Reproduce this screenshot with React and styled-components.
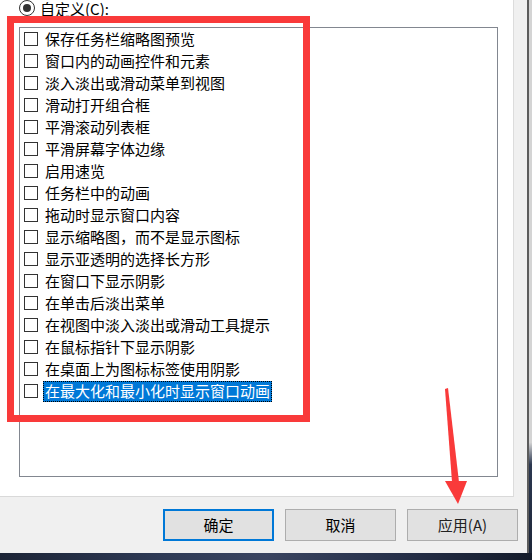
import styled, { createGlobalStyle } from "styled-components";

const Global = createGlobalStyle`
  html, body { margin: 0; padding: 0; background: #ffffff; }
  body { width: 532px; height: 560px; overflow: hidden; }
`;

const items = [
  "保存任务栏缩略图预览",
  "窗口内的动画控件和元素",
  "淡入淡出或滑动菜单到视图",
  "滑动打开组合框",
  "平滑滚动列表框",
  "平滑屏幕字体边缘",
  "启用速览",
  "任务栏中的动画",
  "拖动时显示窗口内容",
  "显示缩略图，而不是显示图标",
  "显示亚透明的选择长方形",
  "在窗口下显示阴影",
  "在单击后淡出菜单",
  "在视图中淡入淡出或滑动工具提示",
  "在鼠标指针下显示阴影",
  "在桌面上为图标标签使用阴影",
  "在最大化和最小化时显示窗口动画",
];

const Page = styled.div`
  position: relative;
  width: 532px;
  height: 560px;
  display: flex;
  flex-direction: column;
  font-family: "Noto Sans CJK SC", "Microsoft YaHei", sans-serif;
  font-size: 15px;
  color: #000;
`;

const Top = styled.div`
  display: flex;
  height: 553px;
`;

const Dialog = styled.div`
  width: 527px;
  display: flex;
  flex-direction: column;
  background: #f0f0f0;
`;

const Edge = styled.div`
  flex: 1;
  border-left: 2px solid #5c5c5c;
  background: linear-gradient(#d4d4d4 0%, #d4d4d4 80%, #2c3850 84%, #1d2638 100%);
`;

const Panel = styled.div`
  width: 514px;
  height: 497px;
  background: #fff;
  border-right: 1px solid #dcdcdc;
  border-bottom: 1px solid #d9d9d9;
  box-sizing: border-box;
  padding-left: 19px;
  display: flex;
  flex-direction: column;
`;

const RadioRow = styled.div`
  display: flex;
  align-items: center;
  gap: 5px;
  height: 16px;
  line-height: 17px;
`;

const Radio = styled.span`
  width: 16px;
  height: 16px;
  box-sizing: border-box;
  border: 1px solid #333;
  border-radius: 50%;
  display: flex;
  align-items: center;
  justify-content: center;
  &::after {
    content: "";
    width: 8px;
    height: 8px;
    border-radius: 50%;
    background: #333;
  }
`;

const ListBox = styled.div`
  margin-top: 11px;
  width: 479px;
  height: 450px;
  box-sizing: border-box;
  border: 1px solid #828790;
  padding-left: 4px;
  display: flex;
  flex-direction: column;
`;

const Row = styled.div`
  height: 22px;
  display: flex;
  align-items: center;
`;

const Box = styled.span`
  width: 14px;
  height: 14px;
  box-sizing: border-box;
  border: 1px solid #333;
  background: #fff;
  flex-shrink: 0;
`;

const Label = styled.span`
  margin-left: 5px;
  padding: 0 2px;
  height: 21px;
  line-height: 20px;
  box-sizing: border-box;
  white-space: nowrap;
  ${(p) =>
    p.selected
      ? `background: #0078d7; color: #fff; outline: 1px dotted #000; outline-offset: -1px;`
      : ``}
`;

const Footer = styled.div`
  flex: 1;
  display: flex;
  align-items: center;
  justify-content: flex-end;
  gap: 11px;
  padding-right: 9px;
  padding-bottom: 1px;
`;

const Button = styled.div`
  width: 111px;
  height: 32px;
  box-sizing: border-box;
  background: #e1e1e1;
  border: ${(p) => (p.primary ? "2px solid #0078d7" : "1px solid #adadad")};
  display: flex;
  align-items: center;
  justify-content: center;
  color: ${(p) => (p.disabled ? "#222" : "#000")};
  line-height: 1;
`;

const Desktop = styled.div`
  flex: 1;
  background: linear-gradient(90deg, #1c2436 0%, #2e3a55 30%, #3a4460 50%, #263049 75%, #141b2a 100%);
`;

const RedFrame = styled.div`
  position: absolute;
  left: 7px;
  top: 16px;
  width: 303px;
  height: 406px;
  box-sizing: border-box;
  border: 7px solid #f93a3a;
  pointer-events: none;
`;

const Arrow = styled.svg`
  position: absolute;
  left: 0;
  top: 0;
  pointer-events: none;
`;

export default function App() {
  return (
    <Page>
      <Global />
      <Top>
        <Dialog>
          <Panel>
            <RadioRow>
              <Radio />
              <span>自定义(C):</span>
            </RadioRow>
            <ListBox>
              {items.map((t, i) => (
                <Row key={t}>
                  <Box />
                  <Label selected={i === items.length - 1}>{t}</Label>
                </Row>
              ))}
            </ListBox>
          </Panel>
          <Footer>
            <Button primary>确定</Button>
            <Button>取消</Button>
            <Button disabled>应用(A)</Button>
          </Footer>
        </Dialog>
        <Edge />
      </Top>
      <Desktop />
      <RedFrame />
      <Arrow width="532" height="560" viewBox="0 0 532 560">
        <polygon points="445,389 448,388 459,482 452,482" fill="#f93a3a" />
        <polygon points="445,481 467,481 458,504" fill="#f93a3a" />
      </Arrow>
    </Page>
  );
}
